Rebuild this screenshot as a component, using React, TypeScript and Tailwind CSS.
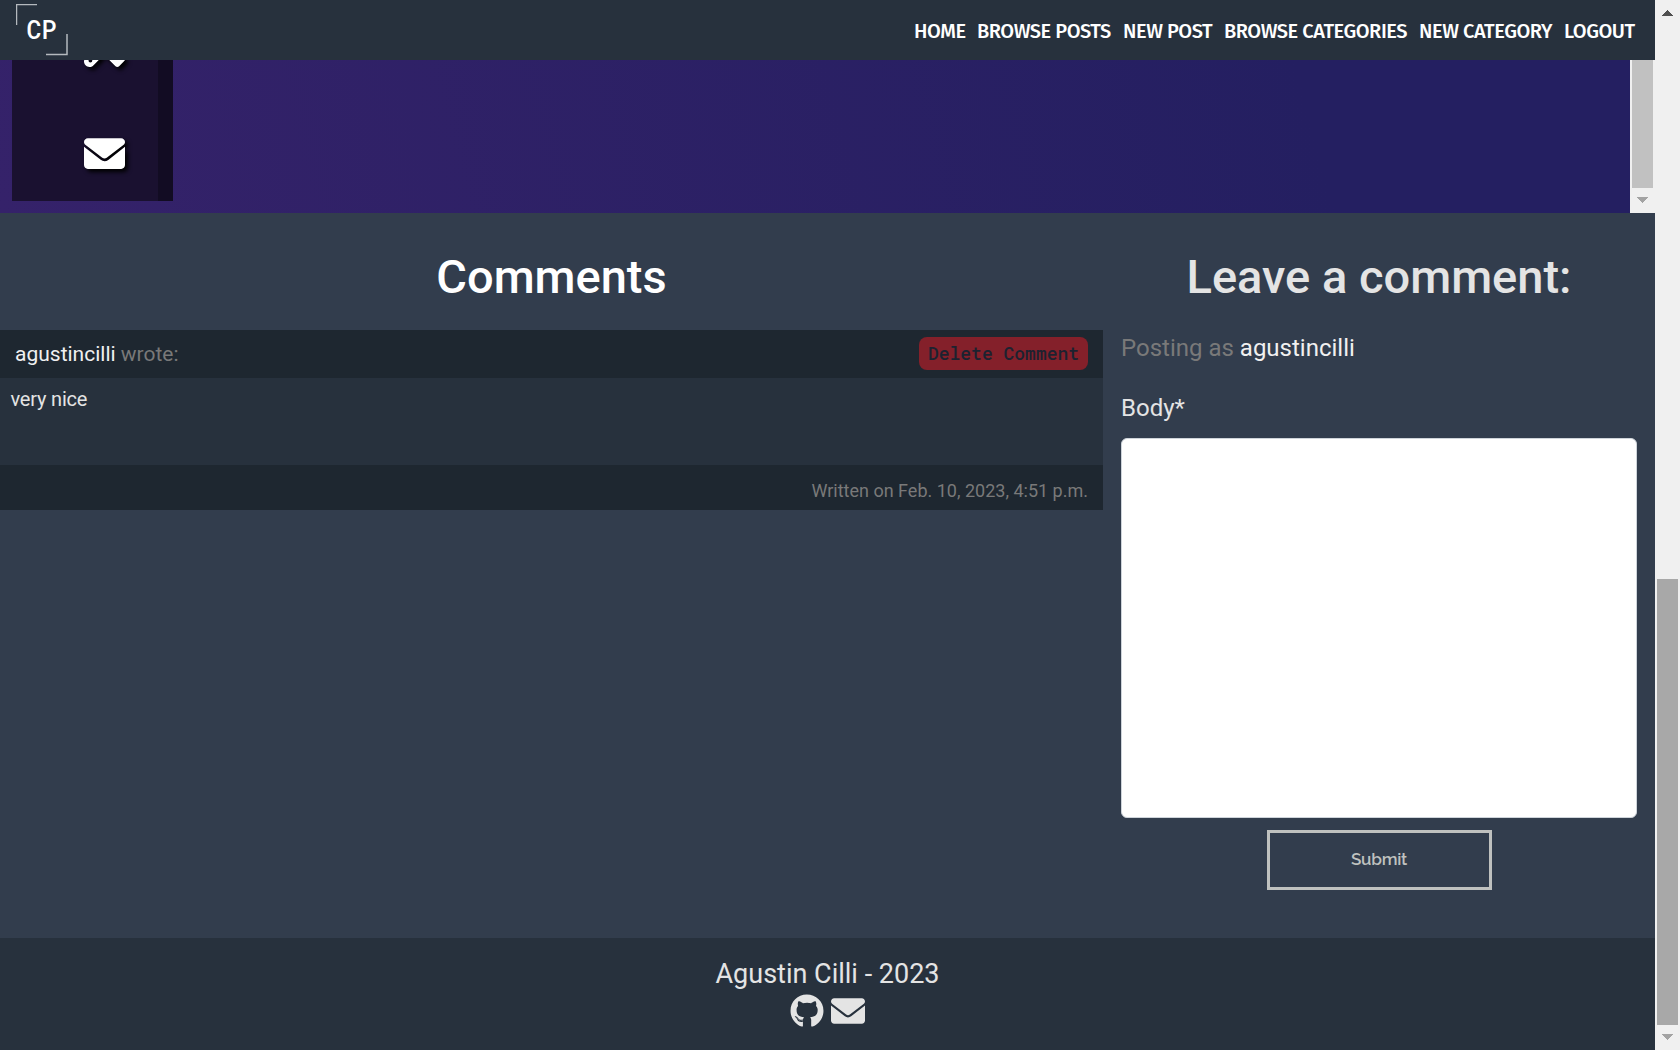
import { FaGithub, FaScrewdriverWrench } from "react-icons/fa6";

function Arrow({ up, dark }: { up?: boolean; dark?: boolean }) {
  return (
    <svg width="11" height="6" viewBox="0 0 11 6" shapeRendering="crispEdges" className={dark ? "text-[#505050]" : "text-[#a3a3a3]"}>
      <path fill="currentColor" d={up ? "M0 6L5.5 0L11 6Z" : "M0 0L5.5 6L11 0Z"} />
    </svg>
  );
}

function Envelope({ size, className }: { size: number; className?: string }) {
  return (
    <svg width={size} height={size} viewBox="0 0 512 512" fill="currentColor" className={className}>
      <path d="M256 352c-16.530 0-33.060-5.422-47.160-16.410L0 173.200V400C0 426.500 21.490 448 48 448h416c26.510 0 48-21.490 48-48V173.200l-208.800 162.500C289.100 346.600 272.500 352 256 352zM16.290 145.300l212.200 165.100c16.190 12.600 38.870 12.600 55.060 0L495.700 145.300C505.800 137.400 512 125.500 512 112C512 85.490 490.500 64 464 64h-416C21.490 64 0 85.490 0 112C0 125.500 6.196 137.400 16.290 145.300z" />
    </svg>
  );
}

function Nav() {
  const links = [
    { label: "HOME", w: "w-[51px]" },
    { label: "BROWSE POSTS", w: "w-[134px]" },
    { label: "NEW POST", w: "w-[89px]" },
    { label: "BROWSE CATEGORIES", w: "w-[183px]" },
    { label: "NEW CATEGORY", w: "w-[133px]" },
    { label: "LOGOUT", w: "w-[71px]" },
  ];
  return (
    <header className="flex h-[60px] shrink-0 items-center justify-between bg-[#27313d] pl-4 pr-5">
      <svg width="52" height="52" viewBox="0 0 52 52">
        <path d="M.5 21V.5H21M51 30V50.500H30" fill="none" stroke="#b4b9be" strokeWidth="1.500" />
        <text x="10.500" y="35" fontFamily="Roboto Mono, Roboto" fontWeight="500" fontSize="25" textLength="30" lengthAdjust="spacingAndGlyphs" fill="#fff">CP</text>
      </svg>
      <nav className="flex gap-3 pt-[2px] font-['Fira_Sans','Noto_Sans',sans-serif] text-[20px] leading-7 font-medium tracking-[-0.450px] text-white">
        {links.map((l) => (
          <a key={l.label} className={`${l.w} block whitespace-nowrap`}>{l.label}</a>
        ))}
      </nav>
    </header>
  );
}

export default function App() {
  return (
    <div className="flex h-[1050px] w-[1680px] overflow-hidden bg-[#323d4d] font-[Roboto,sans-serif] text-[#e4e4e4]">
      <div className="flex w-[1655px] flex-col">
        <Nav />
        <section className="flex h-[153px] shrink-0 overflow-hidden">
          <div className="flex-1 bg-linear-[75deg] from-[#35226a] to-[#241f61] to-80% pl-3">
            <div className="flex h-[141px] w-[161px] bg-[#1a1130]">
              <div className="flex w-[146px] flex-col pl-[72px] text-white">
                <FaScrewdriverWrench size={41} className="-mt-[34px] shrink-0 drop-shadow-[3px_3px_2px_#000]" />
                <Envelope size={41} className="mt-[66px] shrink-0 drop-shadow-[3px_3px_2px_#000]" />
              </div>
              <div className="flex-1 bg-[#120c23]" />
            </div>
          </div>
          <div className="flex w-[25px] flex-col items-center bg-[#f0f0f0]">
            <div className="h-32 w-[21px] bg-[#c1c1c1]" />
            <div className="flex h-6 items-center"><Arrow /></div>
          </div>
        </section>
        <main className="flex h-[725px] shrink-0">
          <section className="w-[1103px]">
            <h2 className="pt-[35px] text-center text-[47px] leading-[58px] font-medium text-white">Comments</h2>
            <article className="mt-6">
              <div className="flex h-12 items-start justify-between bg-[#1e2730] px-[15px] pt-[7px] text-[21px]">
                <p className="pt-px leading-8 text-[#797979]"><span className="text-[#f0f0f0]">agustincilli</span> wrote:</p>
                <button className="h-[33px] w-[169px] rounded-lg bg-[#84202a] font-['Roboto_Mono','DejaVu_Sans_Mono',monospace] text-[18px] font-medium text-[#1c2230]">Delete Comment</button>
              </div>
              <p className="h-[87px] bg-[#27313d] px-[10.500px] pt-[6px] text-[20px] leading-[30px] tracking-[-0.200px]">very nice</p>
              <p className="h-[45px] bg-[#1e2730] pr-[15px] pt-[12px] text-right text-[18px] leading-[27px] text-[#797979]">Written on Feb. 10, 2023, 4:51 p.m.</p>
            </article>
          </section>
          <section className="flex w-[552px] flex-col px-[18px]">
            <h2 className="pt-[35px] text-center text-[47px] leading-[58px] font-medium">Leave a comment:</h2>
            <p className="mt-6 text-[24px] leading-9 text-[#797979]">Posting as <span className="text-[#f0f0f0]">agustincilli</span></p>
            <label className="mt-6 text-[24px] leading-9">Body*</label>
            <textarea className="mt-[12px] h-[380px] w-[516px] resize-none rounded-md border border-[#ced4da] bg-white" />
            <button className="mt-3 h-[60px] w-[225px] self-center border-3 border-[#bfc1bf] font-[Raleway,Lato,sans-serif] text-[17px] font-semibold tracking-[-0.250px] text-[#bfc1bf]">Submit</button>
          </section>
        </main>
        <footer className="flex h-28 flex-col items-center bg-[#27313d] pt-4">
          <p className="text-[27px] leading-10">Agustin Cilli - 2023</p>
          <div className="flex gap-[7px]">
            <FaGithub size={34} />
            <Envelope size={34} />
          </div>
        </footer>
      </div>
      <aside className="flex w-[25px] flex-col items-center bg-[#f0f0f0]">
        <div className="flex h-[26px] items-center"><Arrow up dark /></div>
        <div className="mt-[553px] h-[446px] w-[21px] bg-[#a8a8a8]" />
        <div className="flex h-6 items-center"><Arrow /></div>
      </aside>
    </div>
  );
}
